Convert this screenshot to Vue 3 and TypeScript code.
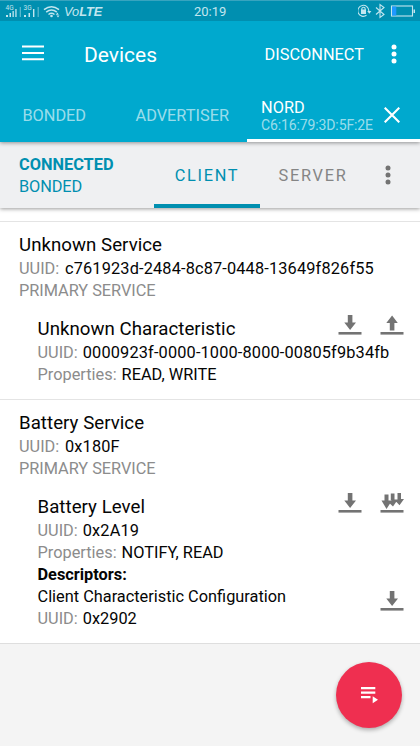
<script setup lang="ts">
type Action = 'read' | 'write' | 'notify'

interface Descriptor {
  name: string
  uuid: string
  actions: Action[]
}

interface Characteristic {
  name: string
  uuid: string
  properties: string
  actions: Action[]
  descriptors: Descriptor[]
}

interface Service {
  name: string
  uuid: string
  kind: string
  characteristic: Characteristic
}

const services: Service[] = [
  {
    name: 'Unknown Service',
    uuid: 'c761923d-2484-8c87-0448-13649f826f55',
    kind: 'PRIMARY SERVICE',
    characteristic: {
      name: 'Unknown Characteristic',
      uuid: '0000923f-0000-1000-8000-00805f9b34fb',
      properties: 'READ, WRITE',
      actions: ['read', 'write'],
      descriptors: [],
    },
  },
  {
    name: 'Battery Service',
    uuid: '0x180F',
    kind: 'PRIMARY SERVICE',
    characteristic: {
      name: 'Battery Level',
      uuid: '0x2A19',
      properties: 'NOTIFY, READ',
      actions: ['read', 'notify'],
      descriptors: [
        { name: 'Client Characteristic Configuration', uuid: '0x2902', actions: ['read'] },
      ],
    },
  },
]

const iconPaths: Record<Action, string> = {
  read: 'M9.800 0h4.600v7.500h3.600L12.100 15 6.300 7.500h3.500z',
  write: 'M12.100 0.500l5.700 7.500h-3.400v7.500H9.800V8H6.300z',
  notify: 'M4.500 1.500h4v6h3.500L6.500 16 1.500 7.500h3z M10.800 0.500h3.700v6h3.300L13 13.500 9.300 10 11.500 7h-0.700z M17.500 0h3.500v6h3L19.500 12.300 16 8.500l1.500-1.500z',
}
</script>

<template>
  <div class="screen">
    <header class="top">
      <div class="status">
        <svg class="signals" viewBox="0 0 62 20" width="62" height="20">
          <g fill="#c3e6ef">
            <text x="5.500" y="8.500" font-size="6.500">4G</text>
            <text x="23.500" y="8.500" font-size="6.500">3G</text>
            <path d="M6 14h2v2H6zM9.500 12h1.500v4H9.500zM12.500 10h1.300v6h-1.300zM15.300 8h1.300v8h-1.300z" />
            <path d="M24 14h2v2h-2zM28.500 12h1.500v4h-1.500zM33 8h1.400v8H33z" />
            <path d="M19.800 6h0.900v10h-0.900zM37.700 6h0.900v10h-0.900z" opacity=".65" />
          </g>
          <g fill="none" stroke="#c3e6ef" stroke-width="1.500">
            <path d="M44 8.700q7.500-6 15 0M46.200 11.200q5.300-4.300 10.600 0M48.500 13.500q3-2.300 6 0" />
          </g>
          <circle cx="51.500" cy="15" r="1.300" fill="#c3e6ef" />
          <path d="M57.500 11.500l-1.800 2.200h3.100zM58 16.500l-1.500-2h3z" fill="#c3e6ef" />
        </svg>
        <span class="volte">Vo<b>LTE</b></span>
        <span class="clock">20:19</span>
        <svg class="indicators" viewBox="0 0 62 20" width="62" height="20">
          <g fill="none" stroke="#c3e6ef" stroke-width="1.100">
            <path d="M8.500 14.300a5.500 5.500 0 1 1 2.300-4.300" />
            <path d="M3.800 9.500V8a1.700 1.700 0 0 1 3.400 0v1.500" />
            <path d="M18 6.500l8 7-4 3V3.500l4 3-8 7" />
            <rect x="33.500" y="5" width="21" height="10" />
          </g>
          <path d="M3 8.500h5V13H3zM9.200 10h4.200l-2.100 2.700z" fill="#c3e6ef" />
          <path d="M55.500 8.500h1.500v3.500h-1.500z" fill="#c3e6ef" />
          <path d="M34 5.500h4.300v9H34z" fill="#1e98ff" />
        </svg>
      </div>

      <div class="appbar">
        <svg class="menu" viewBox="0 0 22 17" width="22" height="17">
          <path d="M0 1.500h22v2H0zM0 7.900h22v2H0zM0 14.300h22v2H0z" fill="#fff" />
        </svg>
        <h1>Devices</h1>
        <span class="disconnect">DISCONNECT</span>
        <svg class="more" viewBox="0 0 6 20" width="6" height="20">
          <g fill="#fff">
            <circle cx="3" cy="3" r="2.500" />
            <circle cx="3" cy="10" r="2.500" />
            <circle cx="3" cy="17" r="2.500" />
          </g>
        </svg>
      </div>

      <nav class="tabs">
        <span class="tab bonded">BONDED</span>
        <span class="tab advertiser">ADVERTISER</span>
        <div class="tab device">
          <div class="device-label">
            <span class="device-name">NORD</span>
            <span class="device-address">C6:16:79:3D:5F:2E</span>
          </div>
          <svg viewBox="0 0 16 16" width="16" height="16">
            <path d="M0.700 0.700l14.600 14.600M15.300 0.700L0.700 15.300" stroke="#fff" stroke-width="2.100" />
          </svg>
        </div>
      </nav>
    </header>

    <section class="connection">
      <div class="state">
        <b>CONNECTED</b>
        <span>BONDED</span>
      </div>
      <span class="role active">CLIENT</span>
      <span class="role">SERVER</span>
      <svg class="more" viewBox="0 0 6 20" width="6" height="20">
        <g fill="#737373">
          <circle cx="3" cy="3" r="2.500" />
          <circle cx="3" cy="10" r="2.500" />
          <circle cx="3" cy="17" r="2.500" />
        </g>
      </svg>
    </section>

    <main class="services">
      <article v-for="service in services" :key="service.uuid" class="service">
        <h2>{{ service.name }}</h2>
        <p class="service-id"><span class="label">UUID:</span><span class="value uuid">{{ service.uuid }}</span></p>
        <p class="kind">{{ service.kind }}</p>

        <div class="characteristic">
          <div class="row">
            <h2>{{ service.characteristic.name }}</h2>
            <div class="actions">
              <svg v-for="action in service.characteristic.actions" :key="action" viewBox="0 0 24 20" width="24" height="20">
                <path :d="iconPaths[action]" fill="#737373" />
                <path d="M0.500 17h23v2.600h-23z" fill="#737373" />
              </svg>
            </div>
          </div>
          <p><span class="label">UUID:</span><span class="value uuid">{{ service.characteristic.uuid }}</span></p>
          <p><span class="label">Properties:</span><span class="value">{{ service.characteristic.properties }}</span></p>

          <template v-if="service.characteristic.descriptors.length">
            <p class="heading">Descriptors:</p>
            <div v-for="descriptor in service.characteristic.descriptors" :key="descriptor.uuid" class="row descriptor">
              <div>
                <p>{{ descriptor.name }}</p>
                <p><span class="label">UUID:</span><span class="value">{{ descriptor.uuid }}</span></p>
              </div>
              <div class="actions">
                <svg v-for="action in descriptor.actions" :key="action" viewBox="0 0 24 20" width="24" height="20">
                  <path :d="iconPaths[action]" fill="#737373" />
                  <path d="M0.500 17h23v2.600h-23z" fill="#737373" />
                </svg>
              </div>
            </div>
          </template>
        </div>
      </article>
    </main>

    <footer class="bottom">
      <button class="fab" type="button" aria-label="Run macro">
        <svg viewBox="0 0 18 18" width="18" height="18">
          <path d="M1 1h14.300v2.300H1zM1 5.500h14.300v2.300H1zM1 10h9.500v2.300H1zM12.700 10.300l5.300 3.500-5.300 3.500z" fill="#fff" />
        </svg>
      </button>
    </footer>
  </div>
</template>

<style>
body {
  margin: 0;
}
</style>

<style scoped>
.screen {
  display: flex;
  flex-direction: column;
  box-sizing: border-box;
  width: 420px;
  height: 746px;
  overflow: hidden;
  background: #f4f4f4;
  color: #050505;
  font-family: Roboto, "Liberation Sans", sans-serif;
  font-size: 16.33px;
}

h1,
h2,
p {
  margin: 0;
  font-weight: 400;
  white-space: nowrap;
}

svg {
  display: block;
  flex: none;
}

.top {
  flex: none;
  height: 142px;
  z-index: 2;
  background: #00a9ce;
  box-shadow: 0 1px 4px rgba(0, 0, 0, 0.4);
}

.status {
  display: flex;
  align-items: center;
  box-sizing: border-box;
  height: 21px;
  border-top: 1px solid #38a4bf;
  background: #008fb0;
  color: #c3e6ef;
  font-size: 13px;
}

.volte {
  width: 130px;
  padding: 1px 0 0 2px;
  font-family: "Liberation Sans", sans-serif;
  font-size: 12.8px;
  font-style: italic;
}

.clock {
  flex: 1;
}

.appbar {
  display: flex;
  align-items: center;
  height: 65px;
  padding: 0 23px 0 22px;
  color: #fff;
}

.menu {
  margin-bottom: 2px;
}

h1 {
  flex: 1;
  padding: 2px 0 0 40px;
  font-size: 21px;
}

.disconnect {
  margin-right: 27px;
  padding-top: 2px;
}

.tabs {
  display: flex;
  height: 56px;
  color: rgba(255, 255, 255, 0.62);
}

.tab {
  box-sizing: border-box;
  line-height: 60px;
}

.bonded {
  width: 135px;
  padding-left: 22.5px;
  letter-spacing: -0.05px;
}

.advertiser {
  width: 112px;
  padding-left: 0.5px;
}

.device {
  display: flex;
  flex: 1;
  padding: 12px 20px 0 14px;
  border-bottom: 3px solid #fff;
  line-height: 18px;
}

.device svg {
  margin-top: 9px;
}

.device-label {
  display: flex;
  flex: 1;
  flex-direction: column;
  padding-top: 1px;
}

.device-name {
  color: #fff;
}

.device-address {
  font-size: 14px;
  letter-spacing: -0.12px;
  line-height: 17px;
}

.connection {
  display: flex;
  flex: none;
  z-index: 1;
  align-items: center;
  box-sizing: border-box;
  height: 66px;
  background: #eff0f2;
  color: #008fb0;
  box-shadow: 0 1px 4px rgba(0, 0, 0, 0.4);
}

.state {
  display: flex;
  flex: none;
  flex-direction: column;
  box-sizing: border-box;
  width: 154px;
  padding: 2px 0 0 19px;
  line-height: 22px;
}

.state span {
  letter-spacing: -0.1px;
}

.role {
  flex: none;
  box-sizing: border-box;
  width: 106px;
  height: 66px;
  border-bottom: 4px solid transparent;
  color: #858585;
  line-height: 68px;
  text-align: center;
  letter-spacing: 1.7px;
}

.role.active {
  border-color: #008fb0;
  color: #008fb0;
}

.connection .more {
  margin-left: 18.5px;
}

.services {
  flex: none;
  padding-top: 13px;
  border-bottom: 1px solid #dedede;
  background: #fff;
}

.service {
  box-sizing: border-box;
  height: 178px;
  padding: 10px 16px 0 19px;
  border-top: 1px solid #e4e4e4;
  line-height: 22px;
}

.service:last-child {
  height: 244px;
}

h2 {
  font-size: 18.67px;
  line-height: 26px;
  letter-spacing: 0.04px;
}

.label,
.kind {
  color: #8c8c8c;
}

.label {
  margin-right: 5px;
}

.service-id .label {
  margin-right: 5.7px;
}

.kind {
  letter-spacing: -0.03px;
}

.uuid {
  letter-spacing: 0.15px;
}

.characteristic {
  padding: 14px 0 0 18.5px;
}

.row {
  display: flex;
  justify-content: space-between;
}

.actions {
  display: flex;
  gap: 18px;
  margin-top: -1px;
}

.descriptor .actions {
  margin-top: 5px;
}

.heading {
  font-weight: 700;
}

.bottom {
  display: flex;
  flex: 1;
  align-items: flex-start;
  justify-content: flex-end;
  padding: 18px 18px 0 0;
}

.fab {
  display: flex;
  align-items: center;
  justify-content: center;
  width: 66px;
  height: 66px;
  padding: 0;
  border: 0;
  border-radius: 50%;
  background: #ef2f50;
  box-shadow: 0 2px 4px rgba(0, 0, 0, 0.3);
}
</style>
